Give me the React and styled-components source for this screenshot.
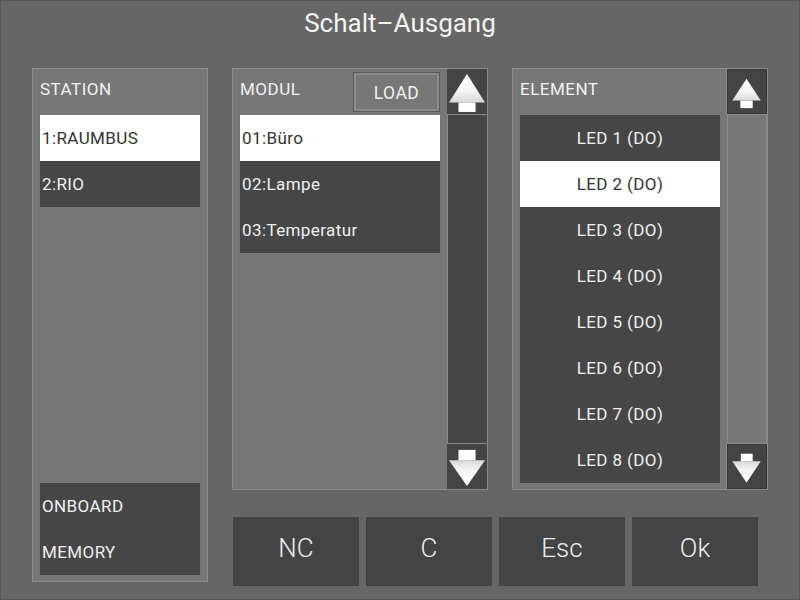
import React from 'react';
import styled, { createGlobalStyle } from 'styled-components';

const Global = createGlobalStyle`
  html, body { margin: 0; padding: 0; background: #666666; }
  body { font-family: Roboto, "Liberation Sans", sans-serif; }
  * { box-sizing: border-box; }
`;

const Screen = styled.div`
  width: 800px;
  height: 600px;
  border: 1px solid #575757;
  background: #666666;
  display: flex;
  flex-direction: column;
`;

const Title = styled.h1`
  margin: 0;
  height: 67px;
  padding-top: 7px;
  text-align: center;
  font-size: 26px;
  font-weight: 400;
  line-height: 30px;
  color: #f4f4f4;
`;

const Main = styled.div`
  display: grid;
  grid-template-columns: 176px 256px 256px;
  grid-template-rows: 422px auto;
  column-gap: 24px;
  margin-left: 31px;
`;

const Panel = styled.section`
  border: 1px solid #8a8a8a;
  background: #777777;
`;

const StationPanel = styled(Panel)`
  grid-row: 1 / 3;
  height: 514px;
  display: flex;
  flex-direction: column;
  padding: 0 7px 6px;
`;

const ListPanel = styled(Panel)`
  display: flex;
  height: 422px;
`;

const ListBody = styled.div`
  flex: 1;
  padding: 0 7px;
  display: flex;
  flex-direction: column;
`;

const Header = styled.div`
  height: 46px;
  display: flex;
  justify-content: space-between;
  align-items: flex-start;
  flex-shrink: 0;
`;

const HeaderLabel = styled.span`
  margin-top: 10px;
  font-size: 17px;
  letter-spacing: 0.5px;
  line-height: 20px;
  color: #f2f2f2;
`;

const LoadButton = styled.button`
  margin-top: 3px;
  width: 87px;
  height: 40px;
  border: 1px solid #5a5a5a;
  box-shadow: inset 0 0 0 2px #8c8c8c;
  background: #777777;
  color: #f2f2f2;
  font-family: inherit;
  font-size: 17.5px;
  letter-spacing: 0.5px;
  padding: 2px 0 0;
`;

const List = styled.div`
  display: flex;
  flex-direction: column;
  flex-shrink: 0;
`;

const Item = styled.div`
  height: 46px;
  display: flex;
  align-items: center;
  justify-content: ${p => (p.$center ? 'center' : 'flex-start')};
  padding-left: ${p => (p.$center ? '0' : '2px')};
  font-size: 17px;
  letter-spacing: 0.4px;
  background: ${p => (p.$selected ? '#ffffff' : '#464646')};
  color: ${p => (p.$selected ? '#333333' : '#f0f0f0')};
`;

const Spacer = styled.div`
  flex: 1;
`;

const ScrollColumn = styled.div`
  width: 40px;
  display: flex;
  flex-direction: column;
`;

const ScrollButton = styled.div`
  height: 45px;
  background: #444444;
  border: 1px solid ${p => (p.$framed ? '#383838' : '#444444')};
  box-shadow: ${p => (p.$framed ? '0 0 0 1px #8a8a8a' : 'none')};
  display: flex;
`;

const Track = styled.div`
  flex: 1;
  background: ${p => (p.$dark ? '#464646' : '#777777')};
  border-left: 1px solid #8a8a8a;
  border-right: 1px solid ${p => (p.$dark ? '#464646' : '#8a8a8a')};
  border-top: 1px solid #8a8a8a;
  border-bottom: 1px solid #8a8a8a;
`;

const ButtonRow = styled.div`
  grid-column: 2 / 4;
  display: flex;
  gap: 7px;
  margin-top: 27px;
  padding-left: 1px;
`;

const ActionButton = styled.button`
  width: 126px;
  height: 69px;
  border: none;
  background: #444444;
  color: #eeeeee;
  font-family: inherit;
  font-size: 26px;
  font-weight: 300;
  padding: 0 0 7px;
`;

const shapes = {
  'up-lg': { tri: '20,3 1,33 39,33', rect: [11, 33, 18, 10] },
  'up-sm': { tri: '19.5,8 4.5,31 34.5,31', rect: [13, 31, 13, 8] },
  'down-lg': { tri: '1,15 39,15 20,42', rect: [11, 4, 18, 11] },
  'down-sm': { tri: '4.5,16 34.5,16 19.5,38.5', rect: [13.5, 8, 12.5, 8] },
};

function Arrow({ kind }) {
  const s = shapes[kind];
  const id = `g-${kind}`;
  const up = kind.startsWith('up');
  return (
    <svg width="40" height="44" viewBox="0 0 40 44">
      <defs>
        <linearGradient id={id} x1="0" y1={up ? '0' : '1'} x2="0" y2={up ? '1' : '0'}>
          <stop offset="0" stopColor="#ffffff" />
          <stop offset="0.6" stopColor="#f4f4f4" />
          <stop offset="1" stopColor="#d8d8d8" />
        </linearGradient>
      </defs>
      <polygon points={s.tri} fill={`url(#${id})`} />
      <rect x={s.rect[0]} y={s.rect[1]} width={s.rect[2]} height={s.rect[3]} fill="#ffffff" />
    </svg>
  );
}

const stations = ['1:RAUMBUS', '2:RIO'];
const modules = ['01:Büro', '02:Lampe', '03:Temperatur'];
const elements = Array.from({ length: 8 }, (_, i) => `LED ${i + 1} (DO)`);

export default function App() {
  return (
    <>
      <Global />
      <Screen>
        <Title>Schalt–Ausgang</Title>
        <Main>
          <StationPanel>
            <Header>
              <HeaderLabel>STATION</HeaderLabel>
            </Header>
            <List>
              {stations.map((s, i) => (
                <Item key={s} $selected={i === 0}>{s}</Item>
              ))}
            </List>
            <Spacer />
            <List>
              <Item>ONBOARD</Item>
              <Item>MEMORY</Item>
            </List>
          </StationPanel>

          <ListPanel>
            <ListBody>
              <Header>
                <HeaderLabel>MODUL</HeaderLabel>
                <LoadButton>LOAD</LoadButton>
              </Header>
              <List>
                {modules.map((m, i) => (
                  <Item key={m} $selected={i === 0}>{m}</Item>
                ))}
              </List>
            </ListBody>
            <ScrollColumn>
              <ScrollButton><Arrow kind="up-lg" /></ScrollButton>
              <Track $dark />
              <ScrollButton><Arrow kind="down-lg" /></ScrollButton>
            </ScrollColumn>
          </ListPanel>

          <ListPanel>
            <ListBody>
              <Header>
                <HeaderLabel>ELEMENT</HeaderLabel>
              </Header>
              <List>
                {elements.map((e, i) => (
                  <Item key={e} $center $selected={i === 1}>{e}</Item>
                ))}
              </List>
            </ListBody>
            <ScrollColumn>
              <ScrollButton $framed><Arrow kind="up-sm" /></ScrollButton>
              <Track />
              <ScrollButton $framed><Arrow kind="down-sm" /></ScrollButton>
            </ScrollColumn>
          </ListPanel>

          <ButtonRow>
            <ActionButton>NC</ActionButton>
            <ActionButton>C</ActionButton>
            <ActionButton>Esc</ActionButton>
            <ActionButton>Ok</ActionButton>
          </ButtonRow>
        </Main>
      </Screen>
    </>
  );
}
